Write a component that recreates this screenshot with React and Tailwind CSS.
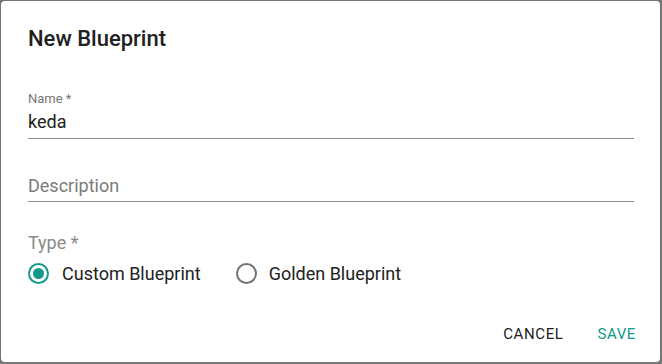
export default function App() {
  const font = { fontFamily: "Roboto, 'Noto Sans', sans-serif" };
  return (
    <div className="w-[662px] h-[364px] bg-[#767676] pt-px pl-px pr-[2px] pb-[2px]" style={font}>
      <div className="w-full h-full bg-white rounded-[4px] flex flex-col">
        <div className="pl-[27px] pr-[26px] pt-[22px]">
          <h2 className="text-[22px] leading-[32px] font-medium text-[#212121]">New Blueprint</h2>
        </div>
        <div className="pl-[27px] pr-[26px] mt-[36px] flex flex-col">
          <div className="flex flex-col">
            <label className="text-[13px] leading-[15px] text-[#757575]">Name *</label>
            <div className="text-[18px] leading-[21px] text-[#212121] mt-[5px] pb-[6px] border-b border-[#8c8c8c]">keda</div>
          </div>
          <div className="flex flex-col mt-[36px]">
            <div className="text-[18px] leading-[21px] text-[#7b7b7b] pb-[5px] border-b border-[#8c8c8c]">Description</div>
          </div>
          <div className="mt-[30px] text-[18px] leading-[21px] text-[#8a8a8a]">Type *</div>
          <div className="flex items-center mt-[9px] h-[22px]">
            <div className="flex items-center">
              <span className="w-[21px] h-[21px] rounded-full border-2 border-[#13998a] flex items-center justify-center">
                <span className="w-[11px] h-[11px] rounded-full bg-[#13998a]" />
              </span>
              <span className="ml-[13px] text-[18px] text-[#212121]">Custom Blueprint</span>
            </div>
            <div className="flex items-center ml-[35px]">
              <span className="w-[21px] h-[21px] rounded-full border-2 border-[#737373]" />
              <span className="ml-[12px] text-[18px] text-[#212121]">Golden Blueprint</span>
            </div>
          </div>
        </div>
        <div className="mt-auto flex justify-end items-center pr-[24px] pb-[16px] gap-[34px]">
          <button className="text-[15px] font-normal tracking-[0.6px] text-[#212121] leading-[24px]">CANCEL</button>
          <button className="text-[15px] font-normal tracking-[0.6px] text-[#13998a] leading-[24px]">SAVE</button>
        </div>
      </div>
    </div>
  );
}
